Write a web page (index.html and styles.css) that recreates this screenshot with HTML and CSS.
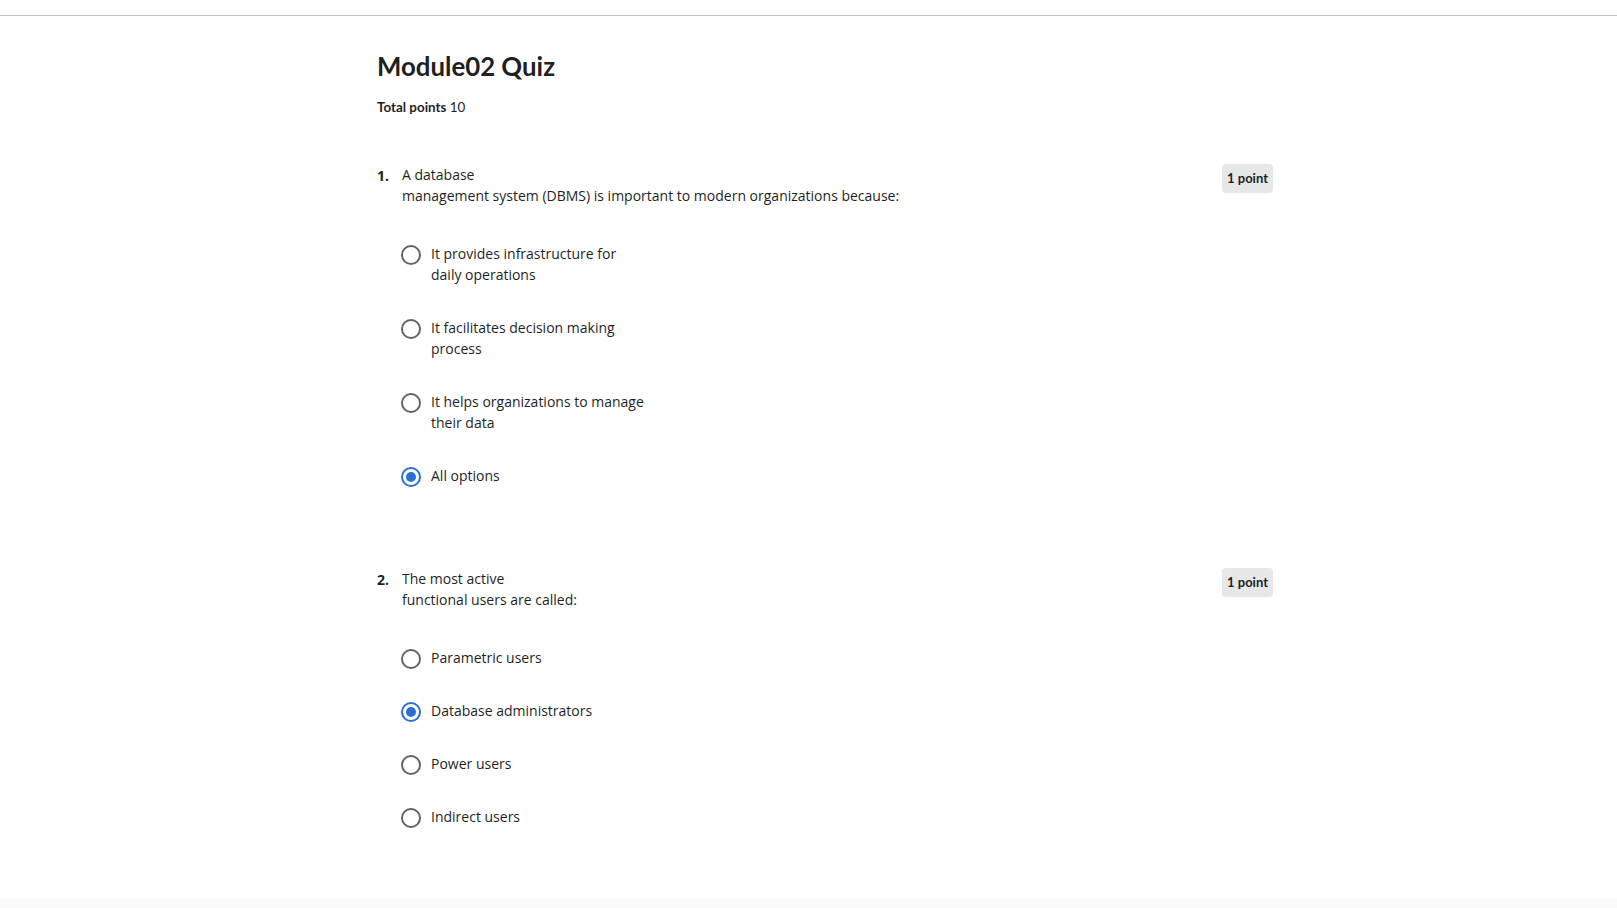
FILE: index.html
```html
<!DOCTYPE html>
<html lang="en">
<head>
<meta charset="utf-8">
<title>Module02 Quiz</title>
<link rel="stylesheet" href="styles.css">
</head>
<body>
<div class="topbar"></div>
<main class="page">
  <h1 class="title">Module02 Quiz</h1>
  <div class="total"><strong>Total points</strong> 10</div>

  <section class="question q1">
    <div class="qnum">1.</div>
    <div class="qbody">
      <div class="qtext">A database<br>management system (DBMS) is important to modern organizations because:</div>
      <div class="options">
        <label class="option"><span class="radio"></span><span class="otext">It provides infrastructure for<br>daily operations</span></label>
        <label class="option"><span class="radio"></span><span class="otext">It facilitates decision making<br>process</span></label>
        <label class="option"><span class="radio"></span><span class="otext">It helps organizations to manage<br>their data</span></label>
        <label class="option"><span class="radio checked"></span><span class="otext">All options</span></label>
      </div>
    </div>
    <div class="badge">1 point</div>
  </section>

  <section class="question q2">
    <div class="qnum">2.</div>
    <div class="qbody">
      <div class="qtext">The most active<br>functional users are called:</div>
      <div class="options">
        <label class="option"><span class="radio"></span><span class="otext">Parametric users</span></label>
        <label class="option"><span class="radio checked"></span><span class="otext">Database administrators</span></label>
        <label class="option"><span class="radio"></span><span class="otext">Power users</span></label>
        <label class="option"><span class="radio"></span><span class="otext">Indirect users</span></label>
      </div>
    </div>
    <div class="badge">1 point</div>
  </section>
</main>
<div class="footer"></div>
</body>
</html>
```
FILE: styles.css
```css
html, body {
  margin: 0;
  padding: 0;
  background: #ffffff;
}
body {
  font-family: "Open Sans", "Noto Sans", sans-serif;
  color: #1f1f1f;
  height: 908px;
  overflow: hidden;
  display: flex;
  flex-direction: column;
}
.topbar {
  height: 15px;
  border-bottom: 1px solid #c4c4c4;
  flex: none;
}
.page {
  flex: 1;
  width: 897px;
  margin-left: 375px;
  padding-top: 33px;
}
.title {
  font-family: "Lato", "Open Sans", sans-serif;
  font-weight: 700;
  font-size: 25.8px;
  line-height: 34px;
  margin: 0 0 0 2px;
  color: #1f1f1f;
}
.total {
  font-family: "Lato", "Open Sans", sans-serif;
  font-size: 13.4px;
  line-height: 18px;
  margin: 15px 0 0 2px;
}
.total strong {
  font-weight: 700;
}
.question {
  display: flex;
  align-items: flex-start;
  margin-top: 48px;
}
.question.q2 {
  margin-top: 82px;
}
.qnum {
  width: 25px;
  margin-left: 2px;
  flex: none;
  font-weight: 700;
  font-size: 14px;
  line-height: 21px;
  padding-top: 1px;
}
.qbody {
  flex: 1;
  font-size: 14px;
  line-height: 21px;
}
.options {
  display: flex;
  flex-direction: column;
  gap: 32px;
  margin-top: 37px;
}
.option {
  display: flex;
  align-items: flex-start;
  gap: 10px;
  margin-left: -2px;
}
.radio {
  flex: none;
  width: 16px;
  height: 16px;
  border: 2px solid #636363;
  border-radius: 50%;
  margin-top: 2px;
  margin-bottom: -1px;
  margin-left: 1px;
  position: relative;
}
.radio.checked {
  border-color: #2a6fd2;
}
.radio.checked::after {
  content: "";
  position: absolute;
  left: 3px;
  top: 3px;
  width: 10px;
  height: 10px;
  border-radius: 50%;
  background: #2a6fd2;
}
.badge {
  flex: none;
  font-family: "Lato", "Open Sans", sans-serif;
  font-weight: 700;
  font-size: 13px;
  line-height: 29px;
  height: 29px;
  padding: 0 5px;
  margin-right: -1px;
  background: #e6e7e9;
  border-radius: 4px;
  color: #1f1f1f;
}
.footer {
  height: 10px;
  flex: none;
  background: #fbfbfb;
}
```
